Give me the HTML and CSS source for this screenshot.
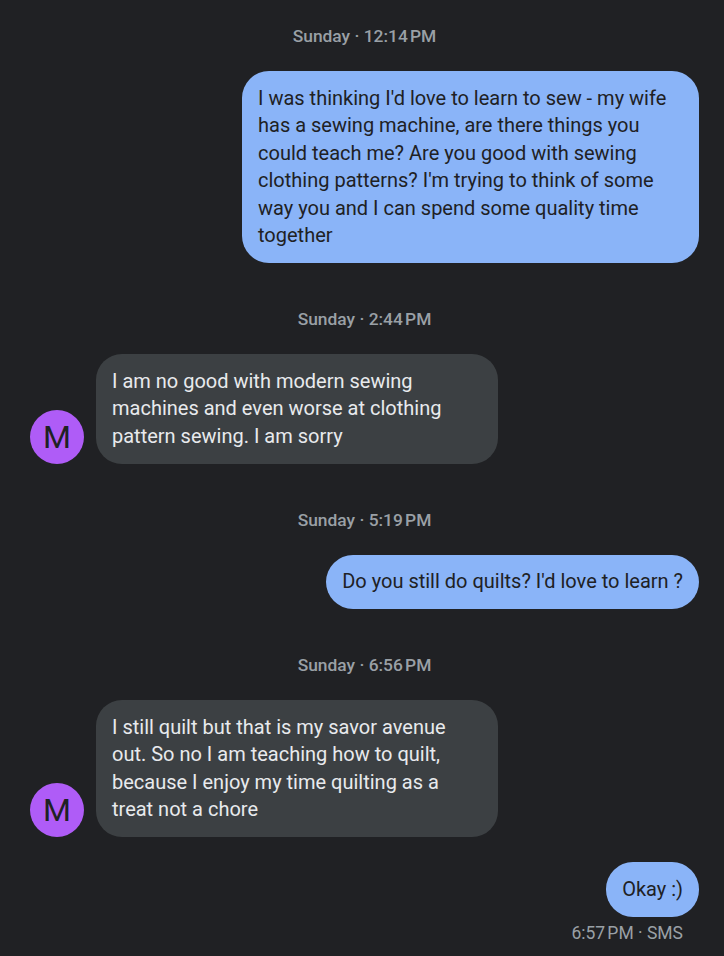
FILE: index.html
```html
<!DOCTYPE html>
<html>
<head>
<meta charset="utf-8">
<link rel="stylesheet" href="styles.css">
</head>
<body>
<main class="thread">
  <div class="stamp first">Sunday · 12:14&#8239;PM</div>
  <div class="row out">
    <div class="bubble sent wide">I was thinking I'd love to learn to sew - my wife has a sewing machine, are there things you could teach me? Are you good with sewing clothing patterns? I'm trying to think of some way you and I can spend some quality time together</div>
  </div>

  <div class="stamp">Sunday · 2:44&#8239;PM</div>
  <div class="row in">
    <div class="avatar">M</div>
    <div class="bubble recv">I am no good with modern sewing machines and even worse at clothing pattern sewing. I am sorry</div>
  </div>

  <div class="stamp">Sunday · 5:19&#8239;PM</div>
  <div class="row out">
    <div class="bubble sent">Do you still do quilts? I'd love to learn ?</div>
  </div>

  <div class="stamp">Sunday · 6:56&#8239;PM</div>
  <div class="row in">
    <div class="avatar">M</div>
    <div class="bubble recv">I still quilt but that is my savor avenue out. So no I am teaching how to quilt, because I enjoy my time quilting as a treat not a chore</div>
  </div>

  <div class="row out next">
    <div class="bubble sent">Okay :)</div>
  </div>
  <div class="status">6:57&#8239;PM · SMS</div>
</main>
</body>
</html>
```

FILE: styles.css
```css
html, body {
  margin: 0;
  padding: 0;
  background: #202124;
}

body {
  font-family: Roboto, "Noto Sans", sans-serif;
  width: 724px;
  height: 956px;
  overflow: hidden;
}

.thread {
  display: flex;
  flex-direction: column;
  padding: 0 25px 0 30px;
}

.stamp {
  text-align: center;
  font-size: 17.4px;
  font-weight: 500;
  line-height: 20px;
  color: #9aa0a6;
  margin-top: 46px;
  margin-bottom: 25px;
}

.stamp.first {
  margin-top: 26px;
}

.row {
  display: flex;
  align-items: flex-end;
}

.row.out {
  justify-content: flex-end;
}

.row.next {
  margin-top: 25px;
}

.bubble {
  font-size: 20px;
  line-height: 27.5px;
  padding: 13.5px 16px;
  border-radius: 26px;
  box-sizing: border-box;
}

.sent {
  background: #8ab4f8;
  color: #202124;
  max-width: 457px;
  border-radius: 27px;
}

.recv {
  background: #3c4043;
  color: #e8eaed;
  width: 402px;
  padding-right: 40px;
}

.avatar {
  width: 54px;
  height: 54px;
  border-radius: 50%;
  background: #af5cf7;
  color: #202124;
  font-size: 32px;
  line-height: 54px;
  text-align: center;
  margin-right: 12px;
  flex-shrink: 0;
}

.status {
  text-align: right;
  font-size: 17.5px;
  line-height: 20px;
  color: #9aa0a6;
  margin-top: 6px;
  padding-right: 16px;
}
```
